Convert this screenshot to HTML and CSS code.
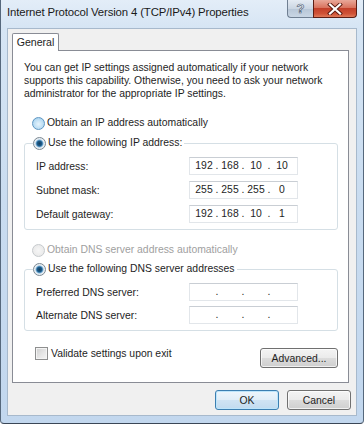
FILE: index.html
```html
<!DOCTYPE html>
<html>
<head>
<meta charset="utf-8">
<link rel="stylesheet" href="styles.css">
</head>
<body>
<div class="window">
  <div class="titlebar">
    <span class="title">Internet Protocol Version 4 (TCP/IPv4) Properties</span>
    <div class="caption-btns">
      <div class="cap-help"><span class="qmark">?</span></div>
      <div class="cap-close">
        <svg width="16" height="12" viewBox="0 0 16 12">
          <path d="M3 1.5 L13 10.5 M13 1.5 L3 10.5" stroke="#5a1a10" stroke-width="4" stroke-linecap="square" fill="none"/>
          <path d="M3 1.5 L13 10.5 M13 1.5 L3 10.5" stroke="#ffffff" stroke-width="2.2" stroke-linecap="square" fill="none"/>
        </svg>
      </div>
    </div>
  </div>
  <div class="client">
    <div class="tabs"><div class="tab">General</div></div>
    <div class="panel">
      <p class="intro">You can get IP settings assigned automatically if your network supports this capability. Otherwise, you need to ask your network administrator for the appropriate IP settings.</p>

      <div class="option option-first"><span class="radio radio-hover"></span><span>Obtain an IP address automatically</span></div>

      <fieldset class="group group-ip">
        <legend class="option"><span class="radio radio-on"></span><span>Use the following IP address:</span></legend>
        <div class="field-row"><span class="label">IP address:</span>
          <div class="ipbox"><span class="seg">192</span><span class="dot">.</span><span class="seg">168</span><span class="dot">.</span><span class="seg">10</span><span class="dot">.</span><span class="seg">10</span></div>
        </div>
        <div class="field-row"><span class="label">Subnet mask:</span>
          <div class="ipbox"><span class="seg">255</span><span class="dot">.</span><span class="seg">255</span><span class="dot">.</span><span class="seg">255</span><span class="dot">.</span><span class="seg">0</span></div>
        </div>
        <div class="field-row"><span class="label">Default gateway:</span>
          <div class="ipbox"><span class="seg">192</span><span class="dot">.</span><span class="seg">168</span><span class="dot">.</span><span class="seg">10</span><span class="dot">.</span><span class="seg">1</span></div>
        </div>
      </fieldset>

      <div class="option option-dns disabled"><span class="radio radio-disabled"></span><span>Obtain DNS server address automatically</span></div>

      <fieldset class="group group-dns">
        <legend class="option"><span class="radio radio-on"></span><span>Use the following DNS server addresses</span></legend>
        <div class="field-row"><span class="label">Preferred DNS server:</span>
          <div class="ipbox"><span class="seg"></span><span class="dot">.</span><span class="seg"></span><span class="dot">.</span><span class="seg"></span><span class="dot">.</span><span class="seg"></span></div>
        </div>
        <div class="field-row"><span class="label">Alternate DNS server:</span>
          <div class="ipbox"><span class="seg"></span><span class="dot">.</span><span class="seg"></span><span class="dot">.</span><span class="seg"></span><span class="dot">.</span><span class="seg"></span></div>
        </div>
      </fieldset>

      <div class="bottom-row">
        <div class="check-opt"><span class="checkbox"></span><span>Validate settings upon exit</span></div>
        <div class="button btn-advanced">Advanced...</div>
      </div>
    </div>
    <div class="footer">
      <div class="button btn-ok">OK</div>
      <div class="button btn-cancel">Cancel</div>
    </div>
  </div>
</div>
</body>
</html>
```

FILE: styles.css
```css
* { box-sizing: border-box; }
html, body { margin: 0; padding: 0; background: #ffffff; }
body { width: 364px; height: 424px; overflow: hidden; }

.window {
  width: 364px;
  height: 424px;
  background: linear-gradient(180deg, #e3edf8 0px, #d6e5f4 28px, #c9dcf0 200px, #c2d7ee 424px);
  border-left: 1px solid #56687c;
  border-right: 1px solid #56687c;
  border-bottom: 1px solid #3a4656;
  border-radius: 0 0 4px 4px;
  display: flex;
  flex-direction: column;
  font-family: "Liberation Sans", Arial, sans-serif;
  font-size: 10.4px;
  color: #1e1e1e;
}

.titlebar {
  height: 28px;
  display: flex;
  align-items: flex-start;
  justify-content: space-between;
  padding-left: 6px;
  padding-right: 6px;
}
.title {
  font-size: 11.4px;
  letter-spacing: -0.15px;
  color: #1a1a1a;
  margin-top: 6px;
}
.caption-btns { display: flex; }
.cap-help {
  width: 26px;
  height: 18px;
  border: 1px solid #6f7f92;
  border-top: none;
  border-right: none;
  border-radius: 0 0 0 4px;
  background: linear-gradient(180deg, #e4ebf3 0%, #cbd6e3 50%, #b7c6d7 51%, #c9d6e4 100%);
  display: flex;
  justify-content: center;
  align-items: center;
}
.qmark {
  font-family: "Liberation Sans", Arial, sans-serif;
  font-weight: bold;
  font-size: 13px;
  line-height: 1;
  color: #f4f8fc;
  -webkit-text-stroke: 0.7px #55657a;
}
.cap-close {
  width: 44px;
  height: 18px;
  border: 1px solid #5c1e14;
  border-top: none;
  border-radius: 0 0 4px 0;
  background: linear-gradient(180deg, #e9a899 0%, #d9735e 45%, #c3402a 50%, #cf5236 80%, #e07a5a 100%);
  display: flex;
  justify-content: center;
  align-items: center;
}
.cap-close svg { display: block; }

.client {
  flex: 1;
  margin: 0 6px 7px 6px;
  background: #f0f0f0;
  border: 1px solid #a7b9cc;
  display: flex;
  flex-direction: column;
}

.tabs {
  display: flex;
  padding-left: 4px;
  margin-top: 4px;
  position: relative;
  z-index: 1;
  margin-bottom: -1px;
}
.tab {
  height: 18px;
  width: 47px;
  background: #ffffff;
  border: 1px solid #898c95;
  border-bottom: none;
  border-radius: 2px 2px 0 0;
  text-align: center;
  line-height: 16px;
  font-size: 10.6px;
}

.panel {
  margin: 0 7px 0 4px;
  height: 333px;
  background: #ffffff;
  border: 1px solid #898c95;
  padding: 10px 10px 0 11px;
  display: flex;
  flex-direction: column;
}

.intro {
  margin: 0;
  line-height: 13px;
  width: 300px;
}

.option {
  display: flex;
  align-items: center;
  gap: 2px;
  height: 14px;
  line-height: 14px;
}
.option-first { margin-top: 16px; margin-left: 8px; }
.option-dns { margin-top: 13px; margin-left: 8px; }
.disabled { color: #a0a0a0; }

.radio {
  width: 13px;
  height: 13px;
  border-radius: 50%;
  border: 1px solid #8d9aa6;
  background: radial-gradient(circle at 50% 50%, #ffffff 0%, #e2e8ee 60%, #cfd7df 100%);
  flex: none;
  position: relative;
}
.radio-hover {
  border-color: #5f97c3;
  background: radial-gradient(circle at 50% 55%, #e6f4fc 0%, #b9dcf3 60%, #8fc4e6 100%);
}
.radio-on {
  border-color: #7b8892;
  background: radial-gradient(circle at 50% 50%, #163f5e 0%, #1d5d8c 32%, #6fa8d2 44%, #e4ecf2 56%, #f6f8fa 100%);
}
.radio-disabled {
  border-color: #c6cacd;
  background: radial-gradient(circle at 50% 50%, #f6f6f6 0%, #e6e6e6 100%);
}

.group {
  margin: 0;
  border: 1px solid #d5dfe5;
  border-radius: 3px;
  padding: 0 6px 6px 11px;
  min-width: 0;
}
.group-ip { margin: 6px 0 0 0; }
.group-dns { margin: 5px 0 0 0; }
.group legend {
  padding: 0 2px 0 0;
  margin-left: -3px;
}

.field-row {
  display: flex;
  align-items: center;
  justify-content: space-between;
  height: 18px;
  margin-top: 6px;
  padding-right: 33px;
}
.group .field-row:first-of-type { margin-top: 7px; }
.group-dns .field-row { margin-top: 5px; }

.ipbox {
  width: 109px;
  height: 18px;
  border: 1px solid #e2e6ea;
  border-top-color: #c9ced4;
  background: #ffffff;
  display: flex;
  align-items: center;
  padding-left: 4px;
  line-height: 16px;
}
.seg { width: 20px; text-align: center; }
.dot { width: 6px; text-align: center; }

.bottom-row {
  display: flex;
  justify-content: space-between;
  align-items: flex-start;
  margin-top: 16px;
}
.check-opt {
  display: flex;
  align-items: center;
  gap: 3px;
  margin-left: 11px;
  height: 13px;
  line-height: 13px;
}
.checkbox {
  width: 13px;
  height: 13px;
  border: 1px solid #8e8f8f;
  background: linear-gradient(135deg, #cfcfcf 0%, #e8e8e8 60%, #f4f4f4 100%);
  box-shadow: inset 0 0 0 1px #f4f4f4;
  flex: none;
}

.button {
  height: 20px;
  border: 1px solid #707070;
  border-radius: 3px;
  background: linear-gradient(180deg, #f4f4f4 0%, #ebebeb 48%, #dcdcdc 52%, #cfcfcf 100%);
  box-shadow: inset 0 0 0 1px rgba(255,255,255,0.7);
  display: flex;
  justify-content: center;
  align-items: center;
  color: #1e1e1e;
}
.btn-advanced { width: 78px; margin-top: 1px; }

.footer {
  display: flex;
  justify-content: flex-end;
  gap: 8px;
  margin-top: 7px;
  padding-right: 5px;
}
.btn-ok {
  width: 64px;
  border-color: #3c7fb1;
  background: linear-gradient(180deg, #eef6fc 0%, #e1eef8 48%, #cfe3f3 52%, #c1dbef 100%);
  box-shadow: inset 0 0 0 1px #bde5fb;
}
.btn-cancel { width: 64px; }
```
